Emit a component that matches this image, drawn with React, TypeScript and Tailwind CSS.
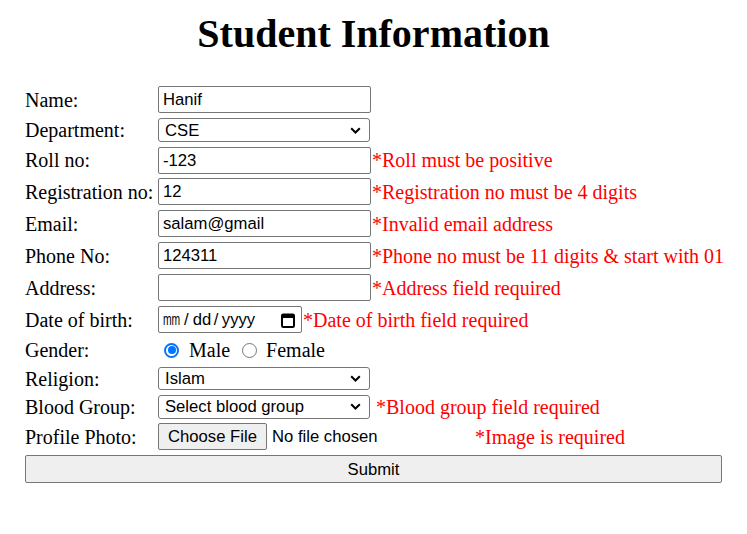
import React from "react";

const serif = { fontFamily: '"Liberation Serif", "Times New Roman", serif' } as const;
const sans = { fontFamily: '"Liberation Sans", Arial, sans-serif' } as const;

function Chevron() {
  return (
    <svg width="11" height="7" viewBox="0 0 11 7" className="shrink-0">
      <path d="M1.2 1.2 L5.5 5.5 L9.8 1.2" fill="none" stroke="#000" strokeWidth="2" />
    </svg>
  );
}

function TextBox({ value, w = 213 }: { value: string; w?: number }) {
  return (
    <div
      className="h-[27px] border border-[#767676] rounded-[2px] bg-white flex items-center px-[4px] text-[16.67px] text-black shrink-0"
      style={{ ...sans, width: w }}
    >
      {value}
    </div>
  );
}

function SelectBox({ value, h = 24 }: { value: string; h?: number }) {
  return (
    <div
      className="w-[212px] border border-[#767676] rounded-[3px] bg-white flex items-center justify-between pl-[6px] pr-[8px] text-[16.67px] text-black shrink-0"
      style={{ ...sans, height: h }}
    >
      <span>{value}</span>
      <Chevron />
    </div>
  );
}

function Err({ children, className = "" }: { children: React.ReactNode; className?: string }) {
  return (
    <span className={"text-[20px] text-[#ff0000] whitespace-nowrap " + className} style={serif}>
      {children}
    </span>
  );
}

function Row({ label, h, children }: { label: string; h: number; children?: React.ReactNode }) {
  return (
    <div className="flex items-center" style={{ height: h }}>
      <div className="w-[133px] shrink-0 text-[20px] text-black" style={serif}>
        {label}
      </div>
      <div className="flex items-center">{children}</div>
    </div>
  );
}

function Radio({ checked }: { checked?: boolean }) {
  return checked ? (
    <div className="w-[15px] h-[15px] rounded-full border-[2px] border-[#0075ff] bg-white flex items-center justify-center shrink-0">
      <div className="w-[8px] h-[8px] rounded-full bg-[#0075ff]" />
    </div>
  ) : (
    <div className="w-[15px] h-[15px] rounded-full border border-[#767676] bg-white shrink-0" />
  );
}

export default function App() {
  return (
    <div className="w-[747px] h-[534px] bg-white text-black relative" style={serif}>
      <h1 className="text-[40px] font-bold text-center leading-[46px] pt-[11px] m-0" style={serif}>
        Student Information
      </h1>
      <div className="ml-[25px] w-[697px] mt-[29px] flex flex-col gap-[5px]">
        <Row label="Name:" h={27}>
          <TextBox value="Hanif" />
        </Row>
        <Row label="Department:" h={24}>
          <SelectBox value="CSE" />
        </Row>
        <Row label="Roll no:" h={26}>
          <TextBox value="-123" />
          <Err className="ml-[1px]">*Roll must be positive</Err>
        </Row>
        <Row label="Registration no:" h={27}>
          <TextBox value="12" />
          <Err className="ml-[1px]">*Registration no must be 4 digits</Err>
        </Row>
        <Row label="Email:" h={27}>
          <TextBox value="salam@gmail" />
          <Err className="ml-[1px]">*Invalid email address</Err>
        </Row>
        <Row label="Phone No:" h={27}>
          <TextBox value="124311" />
          <Err className="ml-[1px]">*Phone no must be 11 digits &amp; start with 01</Err>
        </Row>
        <Row label="Address:" h={27}>
          <TextBox value="" />
          <Err className="ml-[1px]">*Address field required</Err>
        </Row>
        <Row label="Date of birth:" h={27}>
          <div
            className="w-[144px] h-[27px] border border-[#767676] rounded-[2px] bg-white flex items-center justify-between pl-[4px] pr-[6px] text-[16.67px] text-black shrink-0"
            style={sans}
          >
            <div className="flex items-center">
              <span className="inline-block w-[17px] overflow-visible">
                <span className="inline-block origin-left scale-x-[0.62] whitespace-nowrap">mm</span>
              </span>
              <span className="ml-[4px]">/</span>
              <span className="ml-[4px]">dd</span>
              <span className="ml-[2.5px]">/</span>
              <span className="ml-[3.5px]">yyyy</span>
            </div>
            <svg width="14" height="16" viewBox="0 0 14 16">
              <rect x="1" y="2.5" width="12" height="12.5" rx="1.2" fill="none" stroke="#000" strokeWidth="2" />
              <rect x="1" y="2.5" width="12" height="3.5" fill="#000" />
            </svg>
          </div>
          <Err className="ml-[1px]">*Date of birth field required</Err>
        </Row>
        <Row label="Gender:" h={24}>
          <div className="flex items-center text-[20px]" style={serif}>
            <div className="ml-[6px]">
              <Radio checked />
            </div>
            <span className="ml-[10px]">Male</span>
            <div className="ml-[12px]">
              <Radio />
            </div>
            <span className="ml-[9px]">Female</span>
          </div>
        </Row>
        <Row label="Religion:" h={23}>
          <SelectBox value="Islam" h={23} />
        </Row>
        <Row label="Blood Group:" h={23}>
          <SelectBox value="Select blood group" h={24} />
          <Err className="ml-[6px]">*Blood group field required</Err>
        </Row>
        <Row label="Profile Photo:" h={27}>
          <div className="flex items-center w-[317px] shrink-0 text-[16.67px]" style={sans}>
            <div className="h-[27px] w-[109px] border border-[#767676] rounded-[2px] bg-[#efefef] flex items-center justify-center shrink-0">
              Choose File
            </div>
            <span className="ml-[5px]">No file chosen</span>
          </div>
          <Err>*Image is required</Err>
        </Row>
        <div
          className="h-[28px] w-[697px] border border-[#767676] rounded-[2px] bg-[#efefef] flex items-center justify-center text-[16.67px]"
          style={sans}
        >
          Submit
        </div>
      </div>
    </div>
  );
}
